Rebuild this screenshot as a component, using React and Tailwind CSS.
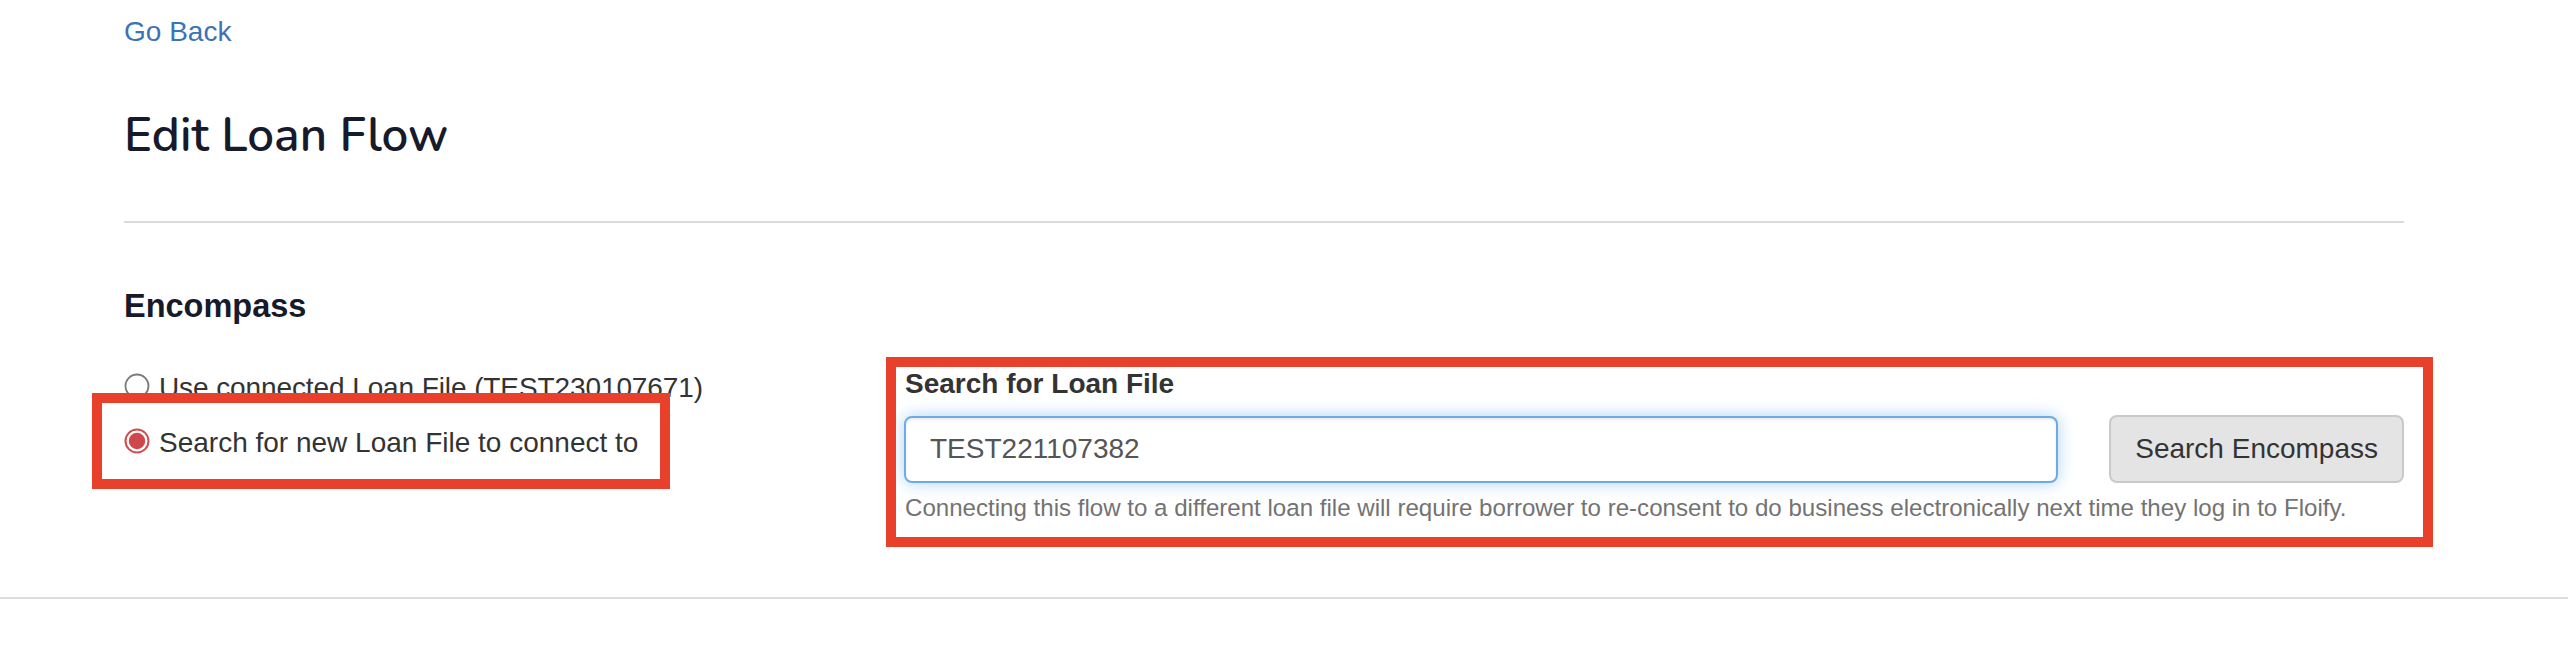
import React from "react";

function Radio({ checked }) {
  return (
    <svg width="26" height="26" viewBox="0 0 26 26" className="shrink-0 relative -top-[2px]">
      {checked ? (
        <>
          <circle cx="13" cy="13" r="11.5" fill="#fff" stroke="#d44a4e" strokeWidth="2" />
          <circle cx="13" cy="13" r="8.2" fill="#cd474b" />
        </>
      ) : (
        <circle cx="13" cy="13" r="11.5" fill="#fff" stroke="#7a7a7a" strokeWidth="1.8" />
      )}
    </svg>
  );
}

export default function App() {
  const sans = { fontFamily: '"Liberation Sans", Arial, Helvetica, sans-serif' };
  return (
    <div className="relative min-h-[646px] w-full bg-white" style={sans}>
      <div className="pl-[124px] pr-[164px]">
        <div className="pt-[12px]">
          <a className="block h-[40px] text-[28px] leading-[40px] text-[#3b74b3]" href="#">
            Go Back
          </a>
        </div>
        <h1
          className="mt-[56px] h-[56px] text-[47.5px] leading-[56px] font-semibold text-[#161a2b]"
          style={{ fontFamily: 'Nunito, Lato, "Noto Sans", sans-serif' }}
        >
          Edit Loan Flow
        </h1>
        <div className="mt-[57px] border-t-2 border-[#dadada]" />
        <h2 className="mt-[63px] h-[40px] text-[32.5px] leading-[40px] font-bold text-[#161a2b]">
          Encompass
        </h2>
        <div className="mt-[34px] grid grid-cols-[780px_1fr]">
          <div className="flex flex-col">
            <label className="flex h-[55px] items-center gap-[9px] text-[28px] leading-[40px] text-[#333333]">
              <Radio checked={false} />
              <span className="tracking-[-0.1px]">Use connected Loan File (TEST230107671)</span>
            </label>
            <label className="flex h-[55px] items-center gap-[9px] text-[28px] leading-[40px] text-[#333333]">
              <Radio checked={true} />
              <span>Search for new Loan File to connect to</span>
            </label>
          </div>
          <div className="flex flex-col pt-[4px]">
            <div className="h-[40px] pl-[1px] text-[28px] leading-[40px] font-bold text-[#333333]">
              Search for Loan File
            </div>
            <div className="mt-[11px] flex items-center gap-[51px]">
              <div className="flex h-[67px] flex-1 items-center rounded-[8px] border-2 border-[#6eaae6] bg-white pl-[24px] text-[28px] text-[#555555] shadow-[inset_0_2px_2px_rgba(0,0,0,0.075),0_0_16px_rgba(102,175,233,0.55)]">
                TEST221107382
              </div>
              <button className="h-[68px] rounded-[8px] border-2 border-[#c9c9c9] bg-[#e4e4e4] px-[24px] text-[28px] text-[#333333]">
                Search Encompass
              </button>
            </div>
            <div className="mt-[8px] h-[34px] pl-[1px] text-[24.1px] leading-[34px] text-[#737373]">
              Connecting this flow to a different loan file will require borrower to re-consent to do business electronically next time they log in to Floify.
            </div>
          </div>
        </div>
      </div>
      <div className="mt-[72px] border-t-2 border-[#dddddd]" />

      <div className="pointer-events-none absolute left-[92px] top-[393px] h-[96px] w-[578px] border-[10px] border-[#e8402a]" />
      <div className="pointer-events-none absolute left-[886px] top-[357px] h-[190px] w-[1547px] border-[10px] border-[#e8402a]" />
    </div>
  );
}
